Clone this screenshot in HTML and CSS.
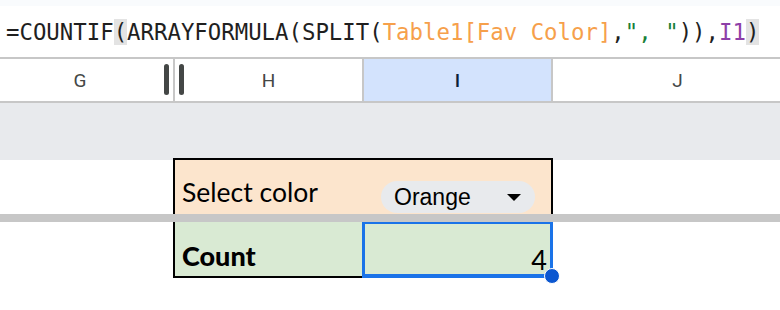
FILE: index.html
```html
<!DOCTYPE html>
<html lang="en">
<head>
    <meta charset="UTF-8">
    <meta name="viewport" content="width=device-width, initial-scale=1.0">
    <title>Sheet</title>
    <link rel="stylesheet" href="styles.css">
</head>
<body>

<div class="sheet">
    <div class="top-strip"></div>

    <!-- formula bar -->
    <div class="formula-bar">
        <span class="fx">=COUNTIF<span class="paren">(</span>ARRAYFORMULA(SPLIT(<span class="ref">Table1[Fav Color]</span>,<span class="str">", "</span>)),<span class="cell">I1</span><span class="paren">)</span></span>
    </div>

    <!-- column headers -->
    <div class="col-heads">
        <div class="col-head col-g">G</div>
        <div class="col-head">H</div>
        <div class="col-head selected">I</div>
        <div class="col-head col-j">J</div>
        <span class="grip grip-left"></span>
        <span class="grip grip-right"></span>
    </div>

    <div class="hidden-band"></div>

    <!-- row: select color -->
    <div class="row row-select">
        <div class="select-cell">
            <span class="label">Select color</span>
            <span class="chip">Orange <span class="caret"></span></span>
        </div>
    </div>

    <div class="freeze-line"></div>

    <!-- row: count -->
    <div class="row row-count">
        <div class="count-cell">
            <div class="count-label">Count</div>
            <div class="count-value">4<span class="handle"></span></div>
        </div>
    </div>
</div>

</body>
</html>
```

FILE: styles.css
```css
body {
    margin: 0;
    padding: 0;
    background-color: #ffffff;
    overflow: hidden;
}

.sheet {
    width: 780px;
    height: 310px;
}

.top-strip {
    height: 6px;
    background-color: #f9fbfd;
}

/* Formula bar */
.formula-bar {
    height: 51px;
    display: flex;
    align-items: center;
    padding-left: 6px;
    font-family: "DejaVu Sans Mono", monospace;
    font-size: 22.35px;
    line-height: 26px;
    color: #1f1f1f;
    white-space: nowrap;
}

.formula-bar .paren {
    background-color: #e3e3e3;
}

.formula-bar .ref {
    color: #f6a04b;
}

.formula-bar .str {
    color: #188038;
}

.formula-bar .cell {
    color: #8e3fa8;
}

/* Column headers */
.col-heads {
    position: relative;
    display: grid;
    grid-template-columns: 173px 187px 187px 1fr;
    column-gap: 2px;
    height: 42px;
    border-top: 2px solid #c7c7c7;
    border-bottom: 2px solid #c7c7c7;
    background-color: #c7c7c7;
}

.col-head {
    display: flex;
    align-items: center;
    justify-content: center;
    background-color: #ffffff;
    font-family: Roboto, sans-serif;
    font-size: 19px;
    color: #444746;
}

.col-head.col-g {
    padding-right: 13px;
}

.col-head.col-j {
    padding-left: 22px;
}

.col-head.selected {
    background-color: #d3e3fd;
    color: #0b1f3a;
    font-weight: 500;
}

.grip {
    position: absolute;
    top: 5px;
    width: 5px;
    height: 31px;
    border-radius: 3px;
    background-color: #444746;
}

.grip-left {
    left: 164px;
}

.grip-right {
    left: 179px;
}

.hidden-band {
    height: 57px;
    background-color: #e8eaed;
}

.row {
    height: 56px;
}

/* Select color row */
.select-cell {
    display: flex;
    align-items: flex-end;
    box-sizing: border-box;
    width: 380px;
    height: 58px;
    margin-left: 173px;
    margin-top: -2px;
    padding: 0 0 1px 7px;
    border: 2px solid #000000;
    background-color: #fce5cd;
}

.select-cell .label {
    width: 199px;
    padding-bottom: 5px;
    font-family: Lato, sans-serif;
    font-size: 26.5px;
    color: #000000;
}

.chip {
    display: flex;
    align-items: center;
    justify-content: space-between;
    box-sizing: border-box;
    width: 154px;
    height: 32px;
    padding: 0 14px 0 13px;
    border-radius: 16px;
    background-color: #e8eaed;
    font-family: "Liberation Sans", Arial, sans-serif;
    font-size: 23px;
    color: #000000;
}

.caret {
    width: 0;
    height: 0;
    border-left: 7px solid transparent;
    border-right: 7px solid transparent;
    border-top: 7px solid #000000;
}

.freeze-line {
    height: 8px;
    background-color: #c7c7c7;
}

/* Count row */
.count-cell {
    display: grid;
    grid-template-columns: 189px 191px;
    width: 380px;
    height: 56px;
    margin-left: 173px;
}

.count-label {
    display: flex;
    align-items: flex-end;
    padding: 0 0 4px 7px;
    border-left: 2px solid #000000;
    border-bottom: 2px solid #000000;
    background-color: #d9ead3;
    font-family: Lato, sans-serif;
    font-weight: 900;
    font-size: 27px;
    color: #000000;
}

.count-value {
    position: relative;
    display: flex;
    align-items: flex-end;
    justify-content: flex-end;
    box-sizing: border-box;
    padding: 0 3px 0 0;
    border: 3px solid #1a73e8;
    border-top-width: 2px;
    border-bottom-width: 4px;
    background-color: #d9ead3;
    font-family: Lato, sans-serif;
    font-size: 27px;
    line-height: 29px;
    color: #000000;
}

.handle {
    position: absolute;
    right: -10px;
    bottom: -10px;
    width: 14px;
    height: 14px;
    border: 1px solid #ffffff;
    border-radius: 50%;
    background-color: #0b57d0;
}
```
